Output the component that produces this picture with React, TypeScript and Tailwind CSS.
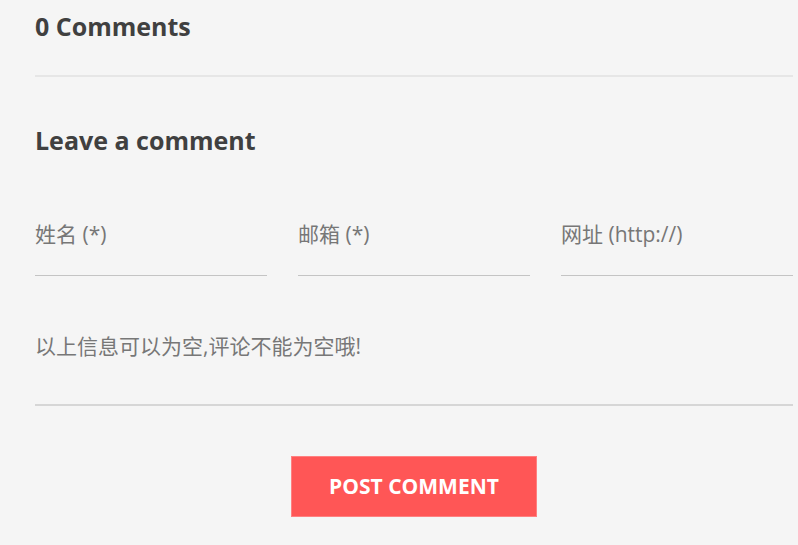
const Field = ({ label }: { label: string }) => (
  <div className="flex-1 border-b border-[#c4c4c4] pt-[12px] pb-[27px]">
    <span className="text-[21px] leading-[26px] text-[#777]">{label}</span>
  </div>
);

const App = () => {
  return (
    <div
      className="min-h-[545px] bg-[#f5f5f5] pl-[35px] pr-[5px]"
      style={{ fontFamily: '"Open Sans", "Noto Sans CJK SC", sans-serif' }}
    >
      <h2 className="pt-[9px] pb-[32px] text-[25px] leading-[34px] font-bold text-[#404040] border-b-2 border-[#e6e6e6]">
        0 Comments
      </h2>
      <h3 className="pt-[46px] text-[25px] leading-[34px] font-bold text-[#404040]">
        Leave a comment
      </h3>
      <div className="flex gap-[31px] pt-[52px]">
        <Field label="姓名 (*)" />
        <Field label="邮箱 (*)" />
        <Field label="网址 (http://)" />
      </div>
      <div className="mt-[57px] border-b-2 border-[#d6d6d6] pb-[44px]">
        <span className="text-[21px] leading-[26px] text-[#777]">
          以上信息可以为空,评论不能为空哦!
        </span>
      </div>
      <div className="flex justify-center pt-[50px]">
        <button className="h-[61px] w-[246px] bg-[#ff5656] border border-[#ff8080] text-white text-[21px] font-bold uppercase">
          Post Comment
        </button>
      </div>
    </div>
  );
};
export default App;
